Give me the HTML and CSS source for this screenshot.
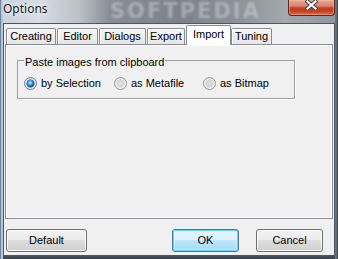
FILE: index.html
```html
<!DOCTYPE html>
<html>
<head>
<meta charset="utf-8">
<link rel="stylesheet" href="styles.css">
</head>
<body>
<div class="window">
  <div class="titlebar">
    <span class="title">Options</span>
    <span class="watermark">SOFTPEDIA</span>
    <div class="close">
      <svg width="13" height="10" viewBox="0 0 13 10">
        <path d="M2.5 1.5 L10.5 8.5 M10.5 1.5 L2.5 8.5" stroke="#3b3f46" stroke-width="4.2" stroke-linecap="square"/>
        <path d="M2.5 1.5 L10.5 8.5 M10.5 1.5 L2.5 8.5" stroke="#ffffff" stroke-width="2.2" stroke-linecap="square"/>
      </svg>
    </div>
  </div>
  <div class="client">
    <div class="tabs">
      <div class="tab w-creating">Creating</div>
      <div class="tab w-editor">Editor</div>
      <div class="tab w-dialogs">Dialogs</div>
      <div class="tab w-export">Export</div>
      <div class="tab tab-active w-import">Import</div>
      <div class="tab w-tuning">Tuning</div>
    </div>
    <div class="panel">
      <div class="group">
        <span class="legend">Paste images from clipboard</span>
        <div class="radios">
          <div class="radio-item w-r1"><span class="radio checked"></span><span>by Selection</span></div>
          <div class="radio-item w-r2"><span class="radio"></span><span>as Metafile</span></div>
          <div class="radio-item"><span class="radio"></span><span>as Bitmap</span></div>
        </div>
      </div>
    </div>
    <div class="buttons">
      <div class="btn btn-default">Default</div>
      <div class="btn btn-ok">OK</div>
      <div class="btn btn-cancel">Cancel</div>
    </div>
  </div>
</div>
</body>
</html>
```
FILE: styles.css
```css
html, body {
  margin: 0;
  padding: 0;
}
body {
  width: 338px;
  height: 259px;
  overflow: hidden;
  font-family: "Liberation Sans", Arial, sans-serif;
  font-size: 11px;
  color: #000;
}
.window {
  width: 338px;
  height: 259px;
  display: flex;
  flex-direction: column;
  box-sizing: border-box;
  background:
    linear-gradient(to right, #6f859c 0px, #6f859c 1px, #a9c0d6 1px, #b9cde0 3px, transparent 3px),
    linear-gradient(to left, #3f474f 0px, #3f474f 1px, #5f6971 1px, #6d7780 3px, transparent 3px),
    linear-gradient(to bottom, transparent 0px, transparent 240px, #5c6670 252px, #39414a 259px),
    linear-gradient(to right, #c9d2da 0px, #d7dde2 40px, #b9c0c6 80px, #878d94 110px, #7c828a 180px, #8d939a 240px, #a3a8ad 285px, #8e959c 338px);
}
.titlebar {
  height: 23px;
  display: flex;
  align-items: flex-start;
  position: relative;
  flex: none;
}
.title {
  font-family: "Noto Sans", "Open Sans", sans-serif;
  font-size: 12px;
  line-height: 16px;
  margin: 1px 0 0 3px;
  color: #161a1e;
  text-shadow: 0 0 6px rgba(255,255,255,0.9), 0 0 3px rgba(255,255,255,0.9);
  position: relative;
  z-index: 1;
}
.watermark {
  position: absolute;
  left: 110px;
  top: 0px;
  font-family: "DejaVu Sans", sans-serif;
  font-weight: bold;
  font-size: 21px;
  line-height: 22px;
  letter-spacing: 2px;
  color: rgba(220, 224, 228, 0.42);
  filter: blur(1px);
}
.close {
  margin-left: auto;
  margin-right: 3px;
  width: 47px;
  height: 16px;
  box-sizing: border-box;
  border: 1px solid #5e2418;
  border-top: none;
  border-radius: 0 0 4px 4px;
  background: linear-gradient(#e4a595 0%, #d98471 40%, #c1452a 52%, #c13d22 70%, #dc6a45 100%);
  box-shadow: inset 0 0 0 1px rgba(255,200,180,0.45);
  display: flex;
  justify-content: center;
  align-items: flex-start;
  position: relative;
  z-index: 1;
}
.close svg {
  display: block;
  margin-top: 0;
}
.client {
  flex: 1;
  margin: 0 3px 3px 3px;
  border: 1px solid #4f565c;
  background: #f0f0f0;
  padding: 1px;
  display: flex;
  flex-direction: column;
}
.tabs {
  height: 19px;
  display: flex;
  align-items: flex-end;
  padding-left: 1px;
  flex: none;
}
.tab {
  height: 16px;
  box-sizing: border-box;
  border: 1px solid #898c95;
  border-bottom: none;
  border-radius: 2px 2px 0 0;
  background: linear-gradient(#f6f6f6, #e6e6e6);
  box-shadow: inset 1px 1px 0 #ffffff;
  text-align: center;
  line-height: 14px;
  margin-right: 1px;
  white-space: nowrap;
}
.tab-active {
  height: 20px;
  margin-bottom: -1px;
  margin-right: 0;
  background: #ffffff;
  box-shadow: none;
  padding-top: 1px;
  position: relative;
  z-index: 1;
}
.w-creating { width: 50px; }
.w-editor { width: 41px; }
.w-dialogs { width: 47px; }
.w-export { width: 38px; }
.w-import { width: 45px; }
.w-tuning { width: 41px; }
.panel {
  height: 175px;
  box-sizing: border-box;
  border: 1px solid #898c95;
  background: #f0f0f0;
  box-shadow: inset 1px 1px 0 #ffffff, inset -1px -1px 0 #ffffff;
  padding: 15px 0 0 11px;
  flex: none;
}
.group {
  width: 278px;
  height: 39px;
  box-sizing: border-box;
  border: 1px solid #a0a0a0;
  box-shadow: 1px 1px 0 #ffffff;
}
.legend {
  display: block;
  width: max-content;
  margin: -5px 0 0 6px;
  padding: 0 1px;
  line-height: 13px;
  background: #f0f0f0;
}
.radios {
  display: flex;
  align-items: center;
  height: 13px;
  margin-top: 8px;
  padding-left: 6px;
}
.radio-item {
  display: flex;
  align-items: center;
  gap: 4px;
  line-height: 13px;
  white-space: nowrap;
}
.w-r1 { width: 90px; }
.w-r2 { width: 89px; }
.radio {
  width: 13px;
  height: 13px;
  box-sizing: border-box;
  border-radius: 50%;
  border: 1px solid #8f9193;
  background: radial-gradient(circle at 50% 50%, #e2e2e2 0px, #d4d4d4 3px, #ececec 5px, #f8f8f8 6px);
  box-shadow: inset 0 0 0 1px #f4f4f4;
  display: flex;
  align-items: center;
  justify-content: center;
  flex: none;
}
.radio.checked {
  border-color: #5a7b96;
}
.radio.checked::after {
  content: "";
  width: 7px;
  height: 7px;
  border-radius: 50%;
  background: radial-gradient(circle at 45% 40%, #c9f0ff 0px, #5fc0f0 1.5px, #1d73b8 3px, #0b4f8a 3.6px);
  box-shadow: 0 0 0 0.5px #2a5f8e;
}
.buttons {
  display: flex;
  margin-top: 10px;
  padding: 0 10px 0 1px;
  flex: none;
}
.btn {
  height: 23px;
  box-sizing: border-box;
  border: 1px solid #707070;
  border-radius: 3px;
  background: linear-gradient(#f2f2f2 0%, #ebebeb 50%, #dddddd 50%, #cfcfcf 100%);
  box-shadow: inset 0 0 0 1px #fbfbfb;
  text-align: center;
  line-height: 21px;
}
.btn-default { width: 81px; }
.btn-ok {
  width: 67px;
  margin-left: auto;
  border-color: #3c7fb1;
  background: linear-gradient(#eaf6fd 0%, #d9f0fc 50%, #bee6fd 50%, #a7d9f5 100%);
  box-shadow: inset 0 0 0 1px #5bd3f8, inset 0 0 0 2px rgba(255,255,255,0.4);
}
.btn-cancel {
  width: 67px;
  margin-left: 17px;
}
```
